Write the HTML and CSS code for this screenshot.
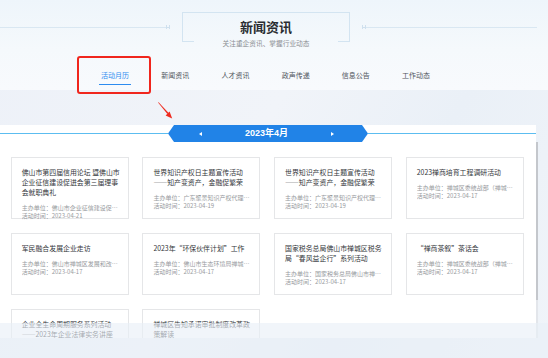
FILE: index.html
```html
<!DOCTYPE html>
<html lang="zh-CN">
<head>
<meta charset="utf-8">
<title>新闻资讯</title>
<link rel="stylesheet" href="styles.css">
</head>
<body>
<div class="page">
  <header class="head">
    <div class="title-row">
      <span class="line line-left"></span><span class="tick tick-left"></span>
      <div class="title-box">
        <h1 class="title">新闻资讯</h1>
        <p class="subtitle">关注重企资讯、掌握行业动态</p>
      </div>
      <span class="tick tick-right"></span><span class="line line-right"></span>
    </div>
    <nav class="tabs">
      <a class="tab active"><span>活动月历</span></a>
      <a class="tab"><span>新闻资讯</span></a>
      <a class="tab"><span>人才资讯</span></a>
      <a class="tab"><span>政声传递</span></a>
      <a class="tab"><span>信息公告</span></a>
      <a class="tab"><span>工作动态</span></a>
    </nav>
  </header>

  <main class="main">
    <div class="panel-wrap">
      <section class="panel">
        <div class="cal-row">
          <span class="cal-line"></span>
          <div class="cal-bar">
            <span class="tri tri-left"></span>
            <span class="cal-text">2023年4月</span>
            <span class="tri tri-right"></span>
          </div>
          <span class="cal-line"></span>
        </div>
        <div class="cards">
          <div class="card">
            <div class="card-title">佛山市第四届信用论坛 暨佛山市企业征信建设促进会第三届理事会就职典礼</div>
            <div class="card-meta">
              <div class="meta-line">主办单位：佛山市企业征信建设促进会</div>
              <div class="meta-line">活动时间：2023-04-21</div>
            </div>
          </div>
          <div class="card">
            <div class="card-title">世界知识产权日主题宣传活动——知产变资产，金融促繁荣</div>
            <div class="card-meta">
              <div class="meta-line">主办单位：广东聚景知识产权代理有限公司</div>
              <div class="meta-line">活动时间：2023-04-19</div>
            </div>
          </div>
          <div class="card">
            <div class="card-title">世界知识产权日主题宣传活动——知产变资产，金融促繁荣</div>
            <div class="card-meta">
              <div class="meta-line">主办单位：广东聚景知识产权代理有限公司</div>
              <div class="meta-line">活动时间：2023-04-19</div>
            </div>
          </div>
          <div class="card">
            <div class="card-title">2023禅商培育工程调研活动</div>
            <div class="card-meta">
              <div class="meta-line">主办单位：禅城区委统战部（禅城区工商联）</div>
              <div class="meta-line">活动时间：2023-04-17</div>
            </div>
          </div>
          <div class="card">
            <div class="card-title">军民融合发展企业走访</div>
            <div class="card-meta">
              <div class="meta-line">主办单位：佛山市禅城区发展和改革局</div>
              <div class="meta-line">活动时间：2023-04-17</div>
            </div>
          </div>
          <div class="card">
            <div class="card-title">2023年“环保伙伴计划”工作</div>
            <div class="card-meta">
              <div class="meta-line">主办单位：佛山市生态环境局禅城分局</div>
              <div class="meta-line">活动时间：2023-04-17</div>
            </div>
          </div>
          <div class="card">
            <div class="card-title">国家税务总局佛山市禅城区税务局“春风益企行”系列活动</div>
            <div class="card-meta">
              <div class="meta-line">主办单位：国家税务总局佛山市禅城区税务局</div>
              <div class="meta-line">活动时间：2023-04-17</div>
            </div>
          </div>
          <div class="card">
            <div class="card-title"> “禅商茶叙”茶话会</div>
            <div class="card-meta">
              <div class="meta-line">主办单位：禅城区委统战部（禅城区工商联）</div>
              <div class="meta-line">活动时间：2023-04-17</div>
            </div>
          </div>
          <div class="card">
            <div class="card-title">企业全生命周期服务系列活动——2023年企业法律实务讲座</div>
            <div class="card-meta">
              <div class="meta-line">主办单位：佛山市禅城区司法局</div>
              <div class="meta-line">活动时间：2023-04-14</div>
            </div>
          </div>
          <div class="card">
            <div class="card-title">禅城区告知承诺审批制度改革政策解读</div>
            <div class="card-meta">
              <div class="meta-line">主办单位：佛山市禅城区行政服务中心</div>
              <div class="meta-line">活动时间：2023-04-13</div>
            </div>
          </div>
        </div>
      </section>
      <div class="scrollbar"><div class="thumb"></div></div>
    </div>
    <div class="fade"></div>
  </main>

  <div class="annot-box"></div>
  <svg class="annot-arrow" width="20" height="21" viewBox="0 0 20 21">
    <polygon points="3,2.6 3.6,2.2 13.6,12.9 12.4,14.1" fill="#ee2b1f"/>
    <polygon points="17.2,18.4 10.6,15.6 14.6,11.6" fill="#ee2b1f"/>
  </svg>
</div>
</body>
</html>
```

FILE: styles.css
```css
* { box-sizing: border-box; }

html, body {
  margin: 0;
  padding: 0;
}

body {
  width: 548px;
  height: 358px;
  overflow: hidden;
  font-family: "Noto Sans CJK SC", "Noto Sans", sans-serif;
  background: linear-gradient(118deg, #edf1f8 0%, #f1f4f9 45%, #eaf0f7 70%, #f0f4f9 100%);
}

.page {
  position: relative;
  width: 548px;
  height: 358px;
}

/* ---------- header ---------- */
.head {
  height: 90px;
  padding-top: 12px;
  background: linear-gradient(180deg, #eef5fb 0%, #f5f9fc 55%, #f8fafd 100%);
}

.title-row {
  display: flex;
  align-items: center;
  width: 537px;
  height: 30px;
}

.line {
  height: 1px;
  background: #d9e7f2;
}

.line-left { width: 166px; }
.line-right { flex: 1; }

.tick {
  width: 4px;
  height: 4px;
  border-left: 1px solid #cfe0ee;
  border-right: 1px solid #cfe0ee;
  background: linear-gradient(#cfe0ee, #cfe0ee) center / 100% 1px no-repeat;
}

.tick-left { margin-right: 12px; }
.tick-right { margin-left: 12px; }

.title-box {
  position: relative;
  width: 168px;
  height: 30px;
  border: 1px solid #d3e4f1;
  border-bottom: none;
  text-align: center;
}

.title-box::before,
.title-box::after {
  content: "";
  position: absolute;
  bottom: 0;
  width: 12px;
  height: 1px;
  background: #d3e4f1;
}

.title-box::before { left: -1px; }
.title-box::after { right: -1px; }

.title {
  margin: 0;
  padding-top: 6px;
  font-size: 13px;
  line-height: 15px;
  font-weight: 700;
  color: #2a2d31;
}

.subtitle {
  margin: 5px 0 0;
  font-size: 6.7px;
  line-height: 8px;
  color: #8b8e93;
  white-space: nowrap;
}

.tabs {
  display: flex;
  margin: 28px 0 0 85px;
}

.tab {
  width: 60.2px;
  text-align: center;
  font-size: 7px;
  line-height: 10px;
  color: #50555c;
}

.tab span {
  display: inline-block;
  padding: 0 2px 4px;
  border-bottom: 1.5px solid transparent;
}

.tab.active span {
  color: #2d8cf0;
  border-bottom-color: #2d8cf0;
}

/* ---------- main ---------- */
.main {
  position: relative;
  height: 268px;
  padding-top: 35px;
}

.panel-wrap {
  display: flex;
  align-items: flex-start;
}

.panel {
  width: 536px;
  height: 213px;
  overflow: hidden;
  background: #ffffff;
}

.cal-row {
  display: flex;
  align-items: center;
  height: 17px;
}

.cal-line {
  flex: 1;
  height: 1px;
  background: #5cbdf0;
}

.cal-bar {
  display: flex;
  align-items: center;
  justify-content: space-between;
  width: 200px;
  height: 17px;
  padding: 0 34px 0 31px;
  background: #2183e7;
  clip-path: polygon(6px 0, calc(100% - 6px) 0, 100% 50%, calc(100% - 6px) 100%, 6px 100%, 0 50%);
}

.cal-text {
  font-family: "Liberation Sans", "Noto Sans CJK SC", sans-serif;
  font-size: 9px;
  font-weight: 700;
  color: #ffffff;
  line-height: 17px;
}

.tri {
  width: 0;
  height: 0;
  border-top: 2.5px solid transparent;
  border-bottom: 2.5px solid transparent;
}

.tri-left { border-right: 3px solid #ffffff; }
.tri-right { border-left: 3px solid #ffffff; }

.cards {
  display: grid;
  grid-template-columns: repeat(4, 118px);
  grid-auto-rows: 62px;
  column-gap: 13.7px;
  row-gap: 14.3px;
  padding: 14.5px 0 0 10.7px;
}

.card {
  border: 1px solid #e5e6e8;
  background: #ffffff;
  padding: 9px 6px 0 10px;
}

.card-title {
  font-size: 6.9px;
  line-height: 10px;
  color: #33363a;
}

.card-meta {
  margin-top: 7px;
  font-size: 6px;
  line-height: 8.5px;
  color: #979a9e;
}

.meta-line {
  white-space: nowrap;
  overflow: hidden;
  text-overflow: ellipsis;
}

.scrollbar {
  width: 2px;
  height: 196px;
  margin-top: 17px;
  background: #e3e6eb;
}

.thumb {
  height: 158px;
  background: #c4c7cc;
}

.fade {
  position: absolute;
  left: 0;
  right: 0;
  top: 233px;
  bottom: 0;
  background: rgba(233, 239, 247, 0.62);
}

/* ---------- annotations ---------- */
.annot-box {
  position: absolute;
  left: 77px;
  top: 56px;
  width: 74px;
  height: 37.5px;
  border: 2.5px solid #f0261d;
  border-radius: 3px;
}

.annot-arrow {
  position: absolute;
  left: 155px;
  top: 100px;
}
```
